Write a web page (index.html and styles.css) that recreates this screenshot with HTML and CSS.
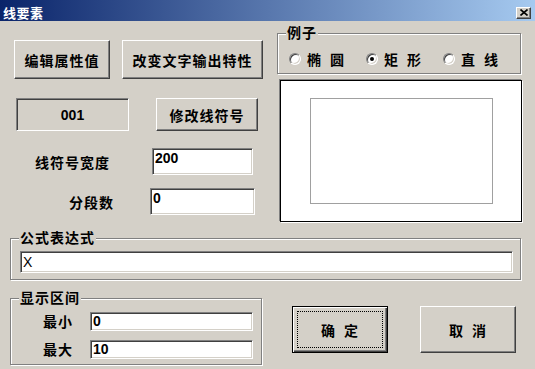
FILE: index.html
```html
<!DOCTYPE html>
<html lang="zh">
<head>
  <meta charset="UTF-8" />
  <title>线要素</title>
  <link rel="stylesheet" href="styles.css">
</head>
<body>
  <div class="dialog">

    <!-- Title bar -->
    <div class="titlebar">
      <span class="title">线要素</span>
      <span class="close-btn">
        <svg width="8" height="7" viewBox="0 0 8 7"><path d="M0.5 0.5 L7.5 6.5 M7.5 0.5 L0.5 6.5" stroke="#000" stroke-width="1.6"/></svg>
      </span>
    </div>

    <div class="content">
      <div class="top">
        <div class="left-col">
          <div class="row row-buttons">
            <button class="btn btn-edit">编辑属性值</button>
            <button class="btn btn-text">改变文字输出特性</button>
          </div>
          <div class="row row-symbol">
            <div class="static-box">001</div>
            <button class="btn btn-symbol">修改线符号</button>
          </div>
          <div class="row row-width">
            <span class="label label-width">线符号宽度</span>
            <input class="edit edit-top edit-width" value="200">
          </div>
          <div class="row row-seg">
            <span class="label label-seg">分段数</span>
            <input class="edit edit-top edit-seg" value="0">
          </div>
        </div>

        <div class="right-col">
          <div class="group group-sample">
            <div class="group-title">例子</div>
            <div class="radios">
              <label class="radio"><span class="radio-dot"></span><span class="spaced">椭 圆</span></label>
              <label class="radio"><span class="radio-dot checked"></span><span class="spaced">矩 形</span></label>
              <label class="radio"><span class="radio-dot"></span><span class="spaced">直 线</span></label>
            </div>
          </div>
          <div class="preview">
            <div class="preview-rect"></div>
          </div>
        </div>
      </div>

      <div class="group group-formula">
        <div class="group-title">公式表达式</div>
        <input class="edit edit-formula" value="X">
      </div>

      <div class="bottom">
        <div class="group group-range">
          <div class="group-title">显示区间</div>
          <div class="range-row range-min">
            <span class="range-label">最小</span>
            <input class="edit edit-range" value="0">
          </div>
          <div class="range-row range-max">
            <span class="range-label">最大</span>
            <input class="edit edit-range" value="10">
          </div>
        </div>
        <button class="btn btn-ok"><span class="focus-rect spaced">确 定</span></button>
        <button class="btn btn-cancel"><span class="spaced">取 消</span></button>
      </div>
    </div>
  </div>
</body>
</html>
```

FILE: styles.css
```css
body {
  margin: 0;
  background-color: #d4d0c8;
  font-family: "Liberation Sans", "Noto Sans CJK SC", sans-serif;
  font-size: 14px;
  font-weight: bold;
  color: #000;
}

.dialog {
  width: 535px;
  height: 369px;
  background-color: #d4d0c8;
  overflow: hidden;
}

/* Title bar */
.titlebar {
  height: 21px;
  box-sizing: border-box;
  padding-top: 4px;
  display: flex;
  align-items: center;
  background: linear-gradient(to right, #0a246a, #a6caf0);
}

.title {
  margin-left: 3px;
  color: #fff;
  font-size: 13px;
  letter-spacing: 0.5px;
}

.close-btn {
  margin-left: auto;
  margin-right: 4px;
  width: 15px;
  height: 12px;
  box-sizing: border-box;
  background-color: #d4d0c8;
  border: 1px solid;
  border-color: #fff #404040 #404040 #fff;
  box-shadow: inset -1px -1px #808080;
  display: flex;
  align-items: center;
  justify-content: center;
}

.content {
  padding-left: 10px;
}

/* Common controls */
.btn {
  box-sizing: border-box;
  margin: 0;
  padding: 0;
  background-color: #d4d0c8;
  border: 1px solid;
  border-color: #fff #404040 #404040 #fff;
  box-shadow: inset -1px -1px #808080;
  font: inherit;
  color: #000;
  letter-spacing: 1px;
}

.edit {
  box-sizing: border-box;
  margin: 0;
  padding: 0 2px;
  background-color: #fff;
  border: 1px solid;
  border-color: #808080 #fff #fff #808080;
  box-shadow: inset 1px 1px #404040, inset -1px -1px #d4d0c8;
  font: bold 14px "Liberation Sans", sans-serif;
  color: #000;
  outline: none;
}

.edit-top {
  padding-bottom: 7px;
}

.spaced {
  word-spacing: 3px;
}

.group {
  box-sizing: border-box;
  border: 1px solid #808080;
  box-shadow: inset 1px 1px #fff, 1px 1px #fff;
}

.group-title {
  width: fit-content;
  margin: -10px 0 0 8px;
  padding: 0 1px;
  line-height: 18px;
  background-color: #d4d0c8;
  letter-spacing: 1px;
}

/* Top area */
.top {
  display: flex;
}

.left-col {
  width: 253px;
}

.row {
  display: flex;
  align-items: center;
}

.row-buttons {
  margin-top: 19px;
  padding-left: 4px;
  gap: 12px;
}

.btn-edit {
  width: 96px;
  height: 39px;
}

.btn-text {
  width: 141px;
  height: 39px;
}

.row-symbol {
  margin-top: 19px;
  padding-left: 6px;
}

.static-box {
  width: 113px;
  height: 33px;
  box-sizing: border-box;
  border: 1px solid;
  border-color: #808080 #fff #fff #808080;
  box-shadow: inset 1px 1px #404040;
  display: flex;
  align-items: center;
  justify-content: center;
}

.btn-symbol {
  margin-left: 27px;
  width: 102px;
  height: 33px;
}

.label {
  text-align: right;
  letter-spacing: 1px;
}

.row-width {
  margin-top: 17px;
}

.label-width {
  width: 100px;
}

.edit-width {
  margin-left: 42px;
  width: 101px;
  height: 27px;
}

.row-seg {
  margin-top: 13px;
}

.label-seg {
  width: 104px;
}

.edit-seg {
  margin-left: 36px;
  width: 105px;
  height: 27px;
}

/* Sample group + preview */
.right-col {
  margin-left: 14px;
  width: 245px;
}

.group-sample {
  margin-top: 12px;
  width: 244px;
  height: 41px;
}

.radios {
  display: flex;
  margin-top: 7px;
  padding-left: 11px;
}

.radio {
  width: 81px;
  display: flex;
  align-items: center;
  letter-spacing: 1px;
}

.radio-dot {
  width: 12px;
  height: 12px;
  box-sizing: border-box;
  margin-right: 6px;
  border-radius: 50%;
  background-color: #fff;
  border: 1px solid;
  border-color: #808080 #fff #fff #808080;
  box-shadow: inset 1px 1px #404040, inset -1px -1px #d4d0c8;
  display: flex;
  align-items: center;
  justify-content: center;
}

.radio-dot.checked::before {
  content: "";
  width: 4px;
  height: 4px;
  border-radius: 50%;
  background-color: #000;
}

.preview {
  margin-top: 6px;
  margin-left: 3px;
  width: 242px;
  height: 142px;
  box-sizing: border-box;
  padding: 17px 0 0 29px;
  background-color: #fff;
  border: 1px solid #000;
  box-shadow: -1px -1px #808080, 1px 1px #fff;
}

.preview-rect {
  width: 183px;
  height: 106px;
  box-sizing: border-box;
  border: 1px solid #a0a0a0;
}

/* Formula group */
.group-formula {
  margin-top: 16px;
  width: 511px;
  height: 42px;
}

.edit-formula {
  display: block;
  margin: 4px 0 0 9px;
  width: 493px;
  height: 22px;
  font-weight: normal;
  font-size: 14px;
}

/* Bottom area */
.bottom {
  display: flex;
  align-items: flex-start;
  margin-top: 18px;
}

.group-range {
  width: 252px;
  height: 67px;
}

.range-row {
  display: flex;
  align-items: center;
  padding-left: 32px;
}

.range-min {
  margin-top: 4px;
}

.range-max {
  margin-top: 8px;
}

.range-label {
  width: 47px;
  letter-spacing: 1px;
}

.edit-range {
  width: 163px;
  height: 19px;
}

.btn-ok {
  margin: 8px 0 0 30px;
  width: 96px;
  height: 47px;
  padding: 4px;
  display: flex;
  border: 1px solid #000;
  box-shadow: inset 1px 1px #fff, inset -1px -1px #404040, inset -2px -2px #808080;
}

.focus-rect {
  flex: 1;
  border: 1px dotted #000;
  display: flex;
  align-items: center;
  justify-content: center;
}

.btn-cancel {
  margin: 8px 0 0 32px;
  width: 96px;
  height: 47px;
}
```
